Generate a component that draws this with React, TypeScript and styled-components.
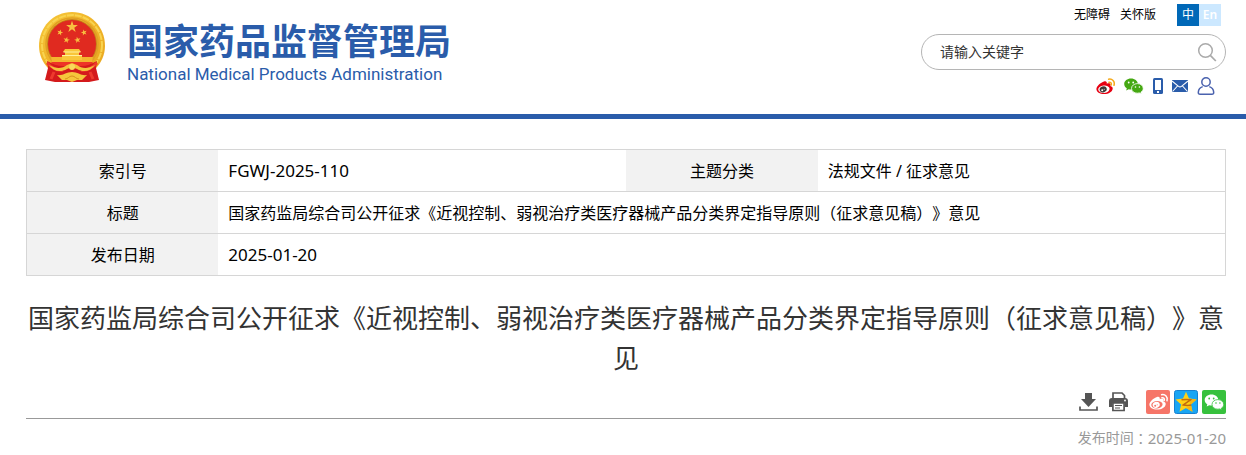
import React from "react";
import styled, { createGlobalStyle } from "styled-components";

const BLUE = "#2a5caa";

const GlobalStyle = createGlobalStyle`
  * { box-sizing: border-box; }
  body {
    margin: 0;
    background: #fff;
    color: #000;
    font-family: "Noto Sans", "Noto Sans CJK SC", sans-serif;
    font-size: 16px;
    text-spacing-trim: space-all;
  }
  a { color: inherit; text-decoration: none; }
  svg { display: block; }
`;

const Header = styled.header`
  display: flex;
  justify-content: space-between;
  align-items: flex-start;
  padding: 4px 20px 20px 38px;
  border-bottom: 5px solid ${BLUE};
`;

const Brand = styled.a`
  display: flex;
  align-items: flex-start;
  gap: 19px;
  padding-top: 8px;
  color: ${BLUE};
`;

const BrandText = styled.span`
  display: flex;
  flex-direction: column;
  padding-top: 7px;
`;

const BrandName = styled.span`
  font-family: "Noto Sans CJK SC", sans-serif;
  font-size: 36px;
  font-weight: 700;
  line-height: 40px;
`;

const BrandLatin = styled.span`
  font-family: Roboto, sans-serif;
  font-size: 17px;
  line-height: 30px;
`;

const Tools = styled.div`
  display: flex;
  flex-direction: column;
  align-items: flex-end;
  gap: 8px;
  width: 305px;
`;

const TopLinks = styled.nav`
  display: flex;
  align-items: center;
  gap: 10px;
  padding-right: 5px;
  font-size: 12px;
  line-height: 22px;
`;

const Languages = styled.div`
  display: flex;
  margin-left: 11px;
`;

const Language = styled.a<{ $active?: boolean }>`
  width: 22px;
  height: 22px;
  text-align: center;
  color: #fff;
  font-weight: ${(p) => (p.$active ? 400 : 600)};
  background: ${(p) => (p.$active ? "#0068b7" : "#cce8ff")};
`;

const SearchForm = styled.form`
  display: flex;
  align-items: center;
  width: 100%;
  height: 36px;
  padding: 0 8px 0 18px;
  border: 1px solid #b5b5b5;
  border-radius: 18px;
`;

const SearchInput = styled.input`
  flex: 1;
  min-width: 0;
  padding: 0 0 2px;
  border: 0;
  outline: 0;
  background: none;
  color: #333;
  font: inherit;
  font-size: 14px;
  &::placeholder { color: #333; opacity: 1; }
`;

const IconButton = styled.button`
  display: flex;
  padding: 0;
  border: 0;
  background: none;
  cursor: pointer;
`;

const Channels = styled.nav`
  display: flex;
  align-items: center;
  gap: 9px;
  height: 16px;
  padding-right: 11px;
`;

const Main = styled.main`
  padding: 30px 20px 0 26px;
`;

const InfoTable = styled.table`
  width: 100%;
  table-layout: fixed;
  border-collapse: collapse;
  border: 1px solid #d6d6d6;
`;

const Row = styled.tr`
  height: 42px;
  border-bottom: 1px solid #d6d6d6;
`;

const Label = styled.th`
  width: 16%;
  padding: 0;
  background: #f2f2f2;
  font-weight: 400;
  line-height: 24px;
`;

const Value = styled.td<{ $numeric?: boolean }>`
  padding: 0 10px;
  font-size: ${(p) => (p.$numeric ? 17 : 16)}px;
  line-height: 24px;
`;

const Title = styled.h1`
  margin: 21px 0 13px;
  color: #333;
  font-family: "Noto Sans CJK SC", sans-serif;
  font-size: 26px;
  font-weight: 400;
  line-height: 40px;
  text-align: center;
`;

const Actions = styled.div`
  display: flex;
  justify-content: flex-end;
  align-items: center;
  gap: 10px;
  padding-bottom: 4px;
  border-bottom: 1px solid #999;
`;

const Share = styled.div`
  display: flex;
  gap: 4px;
  margin-left: 8px;
`;

const Published = styled.p`
  display: flex;
  justify-content: flex-end;
  margin: 0;
  padding-top: 8px;
  color: #999;
  font-size: 14px;
  line-height: 22px;
`;

const Colon = styled.span`
  font-family: "Noto Sans CJK TC", sans-serif;
`;

const PublishedDate = styled.time`
  font-size: 15px;
`;

const STAR = "M0-10 2.3-3.1 9.5-3.1 3.7 1.2 5.9 8.1 0 3.8-5.9 8.1-3.7 1.2-9.5-3.1-2.3-3.1Z";

function Emblem() {
  return (
    <svg width="70" height="72" viewBox="0 0 70 72" aria-hidden="true">
      <defs>
        <linearGradient id="gold" x1="0" y1="0" x2="1" y2="1">
          <stop offset="0" stopColor="#f6c83c" />
          <stop offset=".5" stopColor="#f0b429" />
          <stop offset="1" stopColor="#e9a820" />
        </linearGradient>
      </defs>
      <path d="M34 0C15 0 1 15 1 34c0 9 4 17 9 22h48c5-5 9-13 9-22C67 15 53 0 34 0Z" fill="url(#gold)" />
      <circle cx="34" cy="33" r="30" fill="none" stroke="#f9d450" strokeWidth="2" strokeDasharray="7 1" />
      <circle cx="34" cy="32" r="26" fill="none" stroke="#e0a024" strokeWidth="1.500" />
      <circle cx="34" cy="32" r="25" fill="#c88119" />
      <circle cx="34" cy="32" r="24" fill="#e02a20" />
      <g fill="#f8c040">
        <path transform="translate(34 15) scale(.62)" d={STAR} />
        <path transform="translate(22 20.500) rotate(15) scale(.32)" d={STAR} />
        <path transform="translate(46 20.500) rotate(-15) scale(.32)" d={STAR} />
        <path transform="translate(28.500 28) rotate(12) scale(.34)" d={STAR} />
        <path transform="translate(39.500 28) rotate(-12) scale(.34)" d={STAR} />
      </g>
      <path d="M27 37h14l2 3h-2v3h3v5H24v-5h3v-3h-2Z" fill="#f9c63a" />
      <path d="M25.500 40h17M24 43.500h20" stroke="#fff09c" strokeWidth="1" />
      <path d="M13 45h11v3h20v-3h11l-1 5H14Z" fill="#f4b52f" />
      <path d="M13 50h42l-3 4H16Z" fill="#ee3427" />
      <path d="M9 49c6 3 10 5 16 5h18c6 0 10-2 16-5l-1 7 3 12-10 2H17L7 68l3-12Z" fill="#d41a1c" />
      <path d="M9 51c5 5 10 8 16 7M59 51c-5 5-10 8-16 7M16 60l-3 7M52 60l3 7" fill="none" stroke="#ee3a2d" strokeWidth="3" />
      <path d="M11 53c7 4 13 4 18 0l5-2 5 2c5 4 11 4 18 0-4 6-11 8-18 4l-5-2-5 2c-7 4-14 2-18-4Z" fill="#f4c43c" />
      <path d="M19 63c6 1 9-3 15-3s9 4 15 3l-5 5h-5l-5 2-5-2h-5Z" fill="#f5c63c" />
      <path d="M27 67c3 0 4-3 7-3s4 3 7 3" fill="none" stroke="#d8911b" strokeWidth="1" />
      <circle cx="34" cy="55" r="3" fill="#f9d95c" />
    </svg>
  );
}

type WeiboProps = { body: string; waves: string; eye: string; pupil: string };

function WeiboMark({ body, waves, eye, pupil }: WeiboProps) {
  return (
    <>
      <path d="M8 3.5c1.600-.8 3.400.1 2.700 2.200 2-.8 4.300-.5 3.900 1.500 0 .4-.2.8-.2.8 1.600.4 2.400 1.400 2.300 2.700-.3 3.100-4 5.300-8.500 5.300C3.800 16 .4 14 .4 11 .4 8.200 4.800 4.500 8 3.500Z" fill={body} />
      <ellipse cx="7.900" cy="11.200" rx="5.700" ry="3.700" transform="rotate(-6 8 11)" fill={eye} />
      <ellipse cx="7.200" cy="11.400" rx="3.600" ry="3" transform="rotate(-20 7 11.400)" fill={pupil} />
      <circle cx="6.200" cy="12.200" r="1" fill={eye} />
      <circle cx="8.200" cy="11.200" r=".5" fill={eye} />
      <path d="M12.600 1.200c3.500-.8 6.600 2.200 5.400 6M12.900 4.200c1.600-.3 2.900 1 2.300 2.700" fill="none" stroke={waves} strokeWidth="1.500" strokeLinecap="round" />
    </>
  );
}

function WechatMark({ fill, eyes }: { fill: string; eyes: string }) {
  return (
    <>
      <path d="M7 .5C3.200.5.2 2.900.2 6c0 1.800 1 3.300 2.600 4.300L2.200 12.500l2.500-1.300c.8.2 1.500.3 2.300.3 3.800 0 6.800-2.400 6.800-5.500S10.800.5 7 .5Z" fill={fill} />
      <path d="M13.400 5.600c-3.300 0-5.900 2.100-5.900 4.800s2.600 4.800 5.900 4.800c.7 0 1.400-.1 2-.3l2 1.200-.5-1.900c1.400-.9 2.300-2.200 2.300-3.800 0-2.700-2.600-4.800-5.800-4.800Z" fill={fill} stroke={eyes} strokeWidth=".8" />
      <g fill={eyes}>
        <circle cx="4.700" cy="4.500" r=".9" />
        <circle cx="9.200" cy="4.500" r=".9" />
        <circle cx="11.500" cy="9" r=".8" />
        <circle cx="15.400" cy="9" r=".8" />
      </g>
    </>
  );
}

export default function App() {
  return (
    <>
      <GlobalStyle />
      <Header>
        <Brand href="#">
          <Emblem />
          <BrandText>
            <BrandName>国家药品监督管理局</BrandName>
            <BrandLatin>National Medical Products Administration</BrandLatin>
          </BrandText>
        </Brand>
        <Tools>
          <TopLinks>
            <a href="#">无障碍</a>
            <a href="#">关怀版</a>
            <Languages>
              <Language href="#" $active>中</Language>
              <Language href="#">En</Language>
            </Languages>
          </TopLinks>
          <SearchForm role="search" onSubmit={(e) => e.preventDefault()}>
            <SearchInput type="text" aria-label="请输入关键字" placeholder="请输入关键字" />
            <IconButton type="submit" aria-label="搜索">
              <svg width="20" height="20" viewBox="0 0 20 20" fill="none" stroke="#aaa">
                <circle cx="8.500" cy="8.500" r="6.800" strokeWidth="1.500" />
                <path d="m13.300 13.300 5.500 5.700" strokeWidth="1.700" />
              </svg>
            </IconButton>
          </SearchForm>
          <Channels>
            <a href="#" aria-label="微博">
              <svg width="19" height="17" viewBox="0 0 19 17">
                <WeiboMark body="#e60012" waves="#f5a91b" eye="#fff" pupil="#3e3a39" />
              </svg>
            </a>
            <a href="#" aria-label="微信">
              <svg width="20" height="17" viewBox="0 0 20 17">
                <WechatMark fill="#45a812" eyes="#fff" />
              </svg>
            </a>
            <a href="#" aria-label="移动客户端">
              <svg width="10" height="16" viewBox="0 0 10 16">
                <rect width="10" height="16" rx="1.500" fill={BLUE} />
                <rect x="2" y="2" width="6" height="10" fill="#fff" />
                <rect x="4" y="13" width="2" height="2" fill="#fff" />
              </svg>
            </a>
            <a href="#" aria-label="邮箱">
              <svg width="16" height="12" viewBox="0 0 16 12">
                <rect width="16" height="12" fill={BLUE} />
                <path d="m0 1 6.500 5.400q1.500 1 3 0L16 1M.5 11.500 5.500 6M15.500 11.500 10.500 6" fill="none" stroke="#fff" strokeWidth="1.100" />
              </svg>
            </a>
            <a href="#" aria-label="个人中心">
              <svg width="18" height="18" viewBox="0 0 18 18" fill="none" stroke="#4a62ae" strokeWidth="1.500">
                <circle cx="9" cy="5" r="4.200" />
                <path d="M5.700 9.600C3 10.500 1.500 12.500 1.300 15.200q-.1 2 1.800 2h11.800q1.900 0 1.800-2c-.2-2.700-1.700-4.700-4.400-5.600" />
              </svg>
            </a>
          </Channels>
        </Tools>
      </Header>
      <Main>
        <InfoTable>
          <colgroup>
            <col style={{ width: "16%" }} />
            <col style={{ width: "34%" }} />
            <col style={{ width: "16%" }} />
            <col style={{ width: "34%" }} />
          </colgroup>
          <tbody>
            <Row>
              <Label scope="row">索引号</Label>
              <Value $numeric>FGWJ-2025-110</Value>
              <Label scope="row">主题分类</Label>
              <Value>法规文件 / 征求意见</Value>
            </Row>
            <Row>
              <Label scope="row">标题</Label>
              <Value colSpan={3}>
                国家药监局综合司公开征求《近视控制、弱视治疗类医疗器械产品分类界定指导原则（征求意见稿）》意见
              </Value>
            </Row>
            <Row>
              <Label scope="row">发布日期</Label>
              <Value colSpan={3} $numeric>2025-01-20</Value>
            </Row>
          </tbody>
        </InfoTable>
        <Title>
          国家药监局综合司公开征求《近视控制、弱视治疗类医疗器械产品分类界定指导原则（征求意见稿）》意见
        </Title>
        <Actions>
          <IconButton type="button" aria-label="下载">
            <svg width="20" height="20" viewBox="0 0 20 20" fill="#555">
              <path d="M6 1h7v6h4l-7.500 8L2 7h4Z" />
              <path d="M1 14.500V18h17v-3.500" fill="none" stroke="#555" strokeWidth="1.700" />
            </svg>
          </IconButton>
          <IconButton type="button" aria-label="打印">
            <svg width="19" height="20" viewBox="0 0 19 20">
              <path d="M4 7V1h9l2.500 2.500V7" fill="#fff" stroke="#555" strokeWidth="1.700" />
              <path d="M3 6h13q3 0 3 3v6h-3v-4H3v4H0V9q0-3 3-3Z" fill="#555" />
              <path d="M3.900 11h11.200v7.500H3.900Z" fill="#fff" stroke="#555" strokeWidth="1.700" />
              <path d="M6 13.500h7M6 16h5" stroke="#555" strokeWidth="1.200" />
              <circle cx="16" cy="8.500" r=".9" fill="#fff" />
            </svg>
          </IconButton>
          <Share>
            <IconButton type="button" aria-label="分享到微博">
              <svg width="24" height="24" viewBox="0 0 24 24">
                <rect width="24" height="24" rx="2" fill="#f67568" />
                <g transform="translate(3 3.500)">
                  <WeiboMark body="#fff" waves="#fff" eye="#f67568" pupil="#fff" />
                </g>
              </svg>
            </IconButton>
            <IconButton type="button" aria-label="分享到QQ空间">
              <svg width="24" height="24" viewBox="0 0 24 24">
                <rect x=".5" y=".5" width="23" height="23" rx="2" fill="#18a5f3" stroke="#1680cf" />
                <path d="m12 1.800 3 6.800 7.500.8-5.600 5 1.600 7.400-6.500-3.800-6.500 3.800 1.600-7.400-5.600-5 7.500-.8Z" fill="#fdd116" />
                <path d="m15.500 8.600 7 .8-5.600 5 1.600 7.400-6.500-3.800 4-2Z" fill="#f8b510" />
                <path d="M7.500 9.800q5-.8 9 0L9.300 15q4 .9 8 .1" fill="none" stroke="#c46b0b" strokeWidth="1.500" />
              </svg>
            </IconButton>
            <IconButton type="button" aria-label="分享到微信">
              <svg width="24" height="24" viewBox="0 0 24 24">
                <rect width="24" height="24" rx="2" fill="#37c13d" />
                <g transform="translate(2.500 4)">
                  <WechatMark fill="#fff" eyes="#37c13d" />
                </g>
              </svg>
            </IconButton>
          </Share>
        </Actions>
        <Published>
          发布时间<Colon>：</Colon>
          <PublishedDate dateTime="2025-01-20">2025-01-20</PublishedDate>
        </Published>
      </Main>
    </>
  );
}
